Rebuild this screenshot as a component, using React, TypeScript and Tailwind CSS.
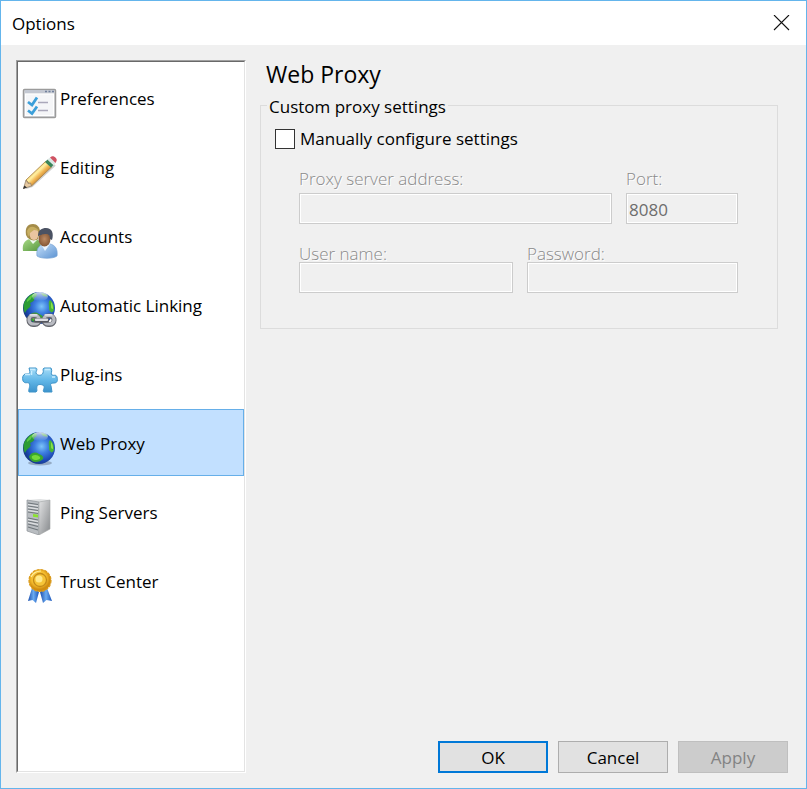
import { useState } from "react";
import type { ReactNode } from "react";

const Globe = ({ id }: { id: string }) => (
  <g>
    <defs>
      <radialGradient id={`${id}-ocean`} cx="0.58" cy="0.45" r="0.6">
        <stop offset="0" stopColor="#7cc4f8" />
        <stop offset="0.35" stopColor="#3f80e0" />
        <stop offset="0.75" stopColor="#1c49b4" />
        <stop offset="1" stopColor="#16357f" />
      </radialGradient>
      <linearGradient id={`${id}-shine`} x1="0" y1="0" x2="0" y2="1">
        <stop offset="0" stopColor="#fff" stopOpacity="0.8" />
        <stop offset="1" stopColor="#fff" stopOpacity="0" />
      </linearGradient>
    </defs>
    <circle cx="17" cy="18" r="16" fill={`url(#${id}-ocean)`} />
    <path d="M3 11C6 6 10 3 14 3c2 2 0 4-2 5 1 2-1 4-4 5 1 2 1 3-1 5-2 1-3 3-4 5-2-4-2-9 0-12Z" fill="#2c9c35" />
    <path d="M5 10c2-3 4-5 7-6 0 2-3 3-3 5l-4 3Z" fill="#5cc846" />
    <path d="M8 25c3-3 6-3 9-1 3 1 5 3 4 5-3 3-8 4-11 2-2-2-4-4-2-6Z" fill="#3aa72c" />
    <path d="M10 26c3-2 6-1 8 1 1 2-2 3-4 3-3 0-5-2-4-4Z" fill="#74da3a" />
    <path d="M28 10c3 2 4 6 4 10-1 2-2 3-3 2-2-1-2-3-2-5 0-3-1-5 1-7Z" fill="#46b433" />
    <path d="M29 12c2 2 2 5 2 7-2 0-2-2-2-3Z" fill="#8be04a" />
    <path d="M19 3c3 0 5 1 7 3-3 1-5 1-7-3Z" fill="#3fa04c" />
    <ellipse cx="18" cy="6.500" rx="8" ry="4.500" fill={`url(#${id}-shine)`} />
  </g>
);

const PreferencesIcon = () => (
  <svg width="36" height="36" viewBox="0 0 36 36" aria-hidden="true">
    <rect x="1.500" y="4.500" width="32" height="28" rx="1" fill="#d7d9dc" stroke="#9b9b9b" strokeWidth="1.500" />
    <rect x="3" y="5" width="29" height="3" fill="#c3c8d2" />
    <path d="M23 6.500h2M26.500 6.500h2M30 6.500h2" stroke="#71809c" strokeWidth="1.500" />
    <rect x="3.500" y="9" width="28" height="21.500" fill="#f5f6f8" stroke="#fff" />
    <path d="M16 17.500h10M16 25.500h10" stroke="#aaa8ba" strokeWidth="1.600" />
    <path d="m6 17 4 3 5-7.500M6 25.500l4 3 5-7" fill="none" stroke="#3c9fd9" strokeWidth="2.800" />
  </svg>
);

const PencilIcon = () => (
  <svg width="36" height="36" viewBox="0 0 36 36" aria-hidden="true">
    <defs>
      <linearGradient id="wood" x1="0.3" y1="0.3" x2="0.7" y2="0.7">
        <stop offset="0" stopColor="#e9c766" />
        <stop offset="0.35" stopColor="#ffefa0" />
        <stop offset="0.6" stopColor="#f1b452" />
        <stop offset="1" stopColor="#a7702c" />
      </linearGradient>
    </defs>
    <path d="m4 34 6-2 23-21" stroke="#888" strokeWidth="2" opacity="0.4" fill="none" />
    <path d="M4 26 23.500 7.500l6 5.500L9.500 32Z" fill="url(#wood)" stroke="#a67b3c" strokeWidth="0.800" />
    <path d="M4 26 1.500 34.500 9.500 32 8.500 29 6 29.500Z" fill="#e7c9a0" stroke="#8c7960" strokeWidth="0.700" />
    <path d="m2.300 31.500-1.300 3.500 4-1.500Z" fill="#333" />
    <path d="m23 8 2.500-2.500 6 5.500L29 13.500Z" fill="#39845a" />
    <path d="m25.500 5.500 2.500-2 5.500 5.500-2 2Z" fill="#dce7e5" />
    <path d="m28 3.500 1.500-1c2-1.500 6.500 2 5 4.500l-1 2Z" fill="#cf5262" />
  </svg>
);

const AccountsIcon = () => (
  <svg width="36" height="36" viewBox="0 0 36 36" aria-hidden="true">
    <defs>
      <linearGradient id="greenCoat" x1="0" y1="0" x2="1" y2="1">
        <stop offset="0" stopColor="#a9da86" />
        <stop offset="1" stopColor="#55963d" />
      </linearGradient>
      <linearGradient id="blueCoat" x1="0" y1="0" x2="1" y2="1">
        <stop offset="0" stopColor="#c6e0fa" />
        <stop offset="1" stopColor="#5c93d2" />
      </linearGradient>
      <radialGradient id="face">
        <stop offset="0" stopColor="#bd8a62" />
        <stop offset="1" stopColor="#855737" />
      </radialGradient>
    </defs>
    <path d="M1 28c-1-6 1-11 7-12h6c4 1 5 5 5 12Z" fill="url(#greenCoat)" />
    <path d="m7 16 4 5 5-5Z" fill="#eef8ee" />
    <path d="M4 12c-1-7 1-11 7-11 4 0 7 3 7 8l-2 7c-4 3-10 1-12-4Z" fill="#a48c49" />
    <ellipse cx="12" cy="11" rx="4.500" ry="6" fill="#eac5a0" />
    <path d="M5 8C7 3 12 2 17 8l-5-1-4 3-2 4Z" fill="#c7ae61" />
    <path d="M15 33c-1-7 2-11 7-12h6c5 1 8 5 7 12-4 3-16 3-20 0Z" fill="url(#blueCoat)" stroke="#77a4d4" strokeWidth="0.700" />
    <path d="m19 21 4 7 5-7Z" fill="#edf5ff" />
    <ellipse cx="22.500" cy="16" rx="6" ry="7.500" fill="url(#face)" />
    <path d="M16 13c0-6 4-8 8-8 6 0 8 5 6 12l-2-1c0-3-1-5-4-5-4 0-5 1-8 2Z" fill="#4b5263" />
  </svg>
);

const LinkingIcon = () => (
  <svg width="36" height="36" viewBox="0 0 36 36" aria-hidden="true">
    <g transform="translate(0 -2)">
      <Globe id="linking" />
    </g>
    <g fill="none" strokeLinecap="round">
      <g stroke="#65676e" strokeWidth="5">
        <rect x="7" y="24" width="10" height="8.500" rx="4" />
        <rect x="22" y="24" width="10" height="8.500" rx="4" />
      </g>
      <g stroke="#b9bbc2" strokeWidth="3.200">
        <rect x="7" y="23.500" width="10" height="8.500" rx="4" />
        <rect x="22" y="23.500" width="10" height="8.500" rx="4" />
      </g>
      <path d="M8 22.800h7M23 22.800h7" stroke="#f1f2f4" strokeWidth="1.200" />
      <path d="M14 28.500h11" stroke="#55575f" strokeWidth="4.500" />
      <path d="M14 27.800h11" stroke="#dddee2" strokeWidth="2.400" />
    </g>
  </svg>
);

const PluginsIcon = () => (
  <svg width="36" height="36" viewBox="0 0 36 36" aria-hidden="true">
    <defs>
      <linearGradient id="puzzle" x1="0" y1="0" x2="0" y2="1">
        <stop offset="0" stopColor="#a6dcf7" />
        <stop offset="0.5" stopColor="#63b8e8" />
        <stop offset="1" stopColor="#3c93cc" />
      </linearGradient>
    </defs>
    <path
      d="M7 7h7c2 1 0 3 0 5 1 3 6 3 7 0 1-2-1-4 1-5h7c2 3-1 6 1 7 2 1 4-1 5 2 1 4 0 6-3 6-3 0-4 1-3 3l1 6h-8c-2-1 1-4 0-6-2-2-6-2-7 0-1 3 1 5-1 6H7c-1-3 2-6 0-9-2-1-4 1-6-2-1-4 0-6 2-7 3 0 5 0 5-2Z"
      fill="url(#puzzle)"
      stroke="#3e93c8"
      strokeLinejoin="round"
    />
    <path d="M8 8.500h5M23 8.500h5M9.500 10v4M3 13.500h5M30 16h3" stroke="#c9edff" strokeWidth="1.500" />
  </svg>
);

const GlobeIcon = () => (
  <svg width="36" height="36" viewBox="0 0 36 36" aria-hidden="true">
    <ellipse cx="18" cy="33" rx="12" ry="2.500" fill="#68758c" opacity="0.5" />
    <Globe id="proxy" />
  </svg>
);

const ServerIcon = () => (
  <svg width="36" height="36" viewBox="0 0 36 36" aria-hidden="true">
    <defs>
      <linearGradient id="side" x1="0" y1="0" x2="1" y2="1">
        <stop offset="0" stopColor="#e2e3e4" />
        <stop offset="1" stopColor="#85888b" />
      </linearGradient>
    </defs>
    <path d="m5 1 13-1 10 1-11 3Z" fill="#dfe1e2" />
    <path d="M5 1l12 2v33L5 32Z" fill="#b9bdc1" stroke="#8e9498" strokeWidth="0.700" />
    <path d="m17 3 11-2v29l-11 6Z" fill="url(#side)" stroke="#a1a4a6" strokeWidth="0.600" />
    <path d="m6 4 10 1.500M6 7l10 1.500M6 10l10 1.500M6 13l10 1.500M6 19l10 2M6 22l10 2M6 25l10 2.500M6 28l10 3" stroke="#6f767b" strokeWidth="1.200" />
    <path d="m6 5.500 10 1.500M6 8.500 16 10M6 11.500 16 13M6 20.500l10 2M6 23.500l10 2" stroke="#eceeef" strokeWidth="0.800" />
    <path d="m11 15 5 .7v2.800l-5-.7Z" fill="#8be32f" />
  </svg>
);

const RibbonIcon = () => (
  <svg width="36" height="36" viewBox="0 0 36 36" aria-hidden="true">
    <defs>
      <radialGradient id="medal" cx="0.45" cy="0.4">
        <stop offset="0" stopColor="#ffe36a" />
        <stop offset="0.7" stopColor="#f3ba2c" />
        <stop offset="1" stopColor="#d08c10" />
      </radialGradient>
      <linearGradient id="ribbon" x1="0" x2="1">
        <stop offset="0" stopColor="#1c4fae" />
        <stop offset="0.5" stopColor="#6aaaf0" />
        <stop offset="1" stopColor="#1a55bb" />
      </linearGradient>
    </defs>
    <path d="m10 20 7 4-3 11-3.500-3L6 33Z" fill="url(#ribbon)" />
    <path d="m25 20-7 4 3 11 3.500-3L30 33Z" fill="url(#ribbon)" />
    <circle cx="18" cy="12.500" r="11" fill="url(#medal)" stroke="#dc9c1c" strokeWidth="1.200" strokeDasharray="3 1" />
    <circle cx="18" cy="12" r="6.500" fill="#f6c437" stroke="#c48a18" strokeWidth="1.300" />
    <circle cx="17" cy="11" r="3.500" fill="#ffe98c" />
    <path d="M9 9c2-4 6-6 10-6" fill="none" stroke="#fff0a0" strokeWidth="1.200" />
  </svg>
);

const sections: { name: string; icon: ReactNode }[] = [
  { name: "Preferences", icon: <PreferencesIcon /> },
  { name: "Editing", icon: <PencilIcon /> },
  { name: "Accounts", icon: <AccountsIcon /> },
  { name: "Automatic Linking", icon: <LinkingIcon /> },
  { name: "Plug-ins", icon: <PluginsIcon /> },
  { name: "Web Proxy", icon: <GlobeIcon /> },
  { name: "Ping Servers", icon: <ServerIcon /> },
  { name: "Trust Center", icon: <RibbonIcon /> },
];

function Field({ id, label, value, type = "text", disabled, className, tight }: {
  id: string; label: string; value?: string; type?: string; disabled: boolean; className: string; tight?: boolean;
}) {
  return (
    <div className={`flex min-w-0 flex-col ${className}`}>
      <label
        htmlFor={id}
        className={`${tight ? "h-4 leading-4" : "h-6 leading-5"} ${disabled ? "font-light text-[#8a8a8a] [text-shadow:1px_1px_0_#ffffff]" : ""}`}
      >
        {label}
      </label>
      <input
        id={id}
        type={type}
        defaultValue={value}
        disabled={disabled}
        className="h-[31px] w-full border border-[#cccccc] bg-white px-0.5 pt-0.5 disabled:bg-[#f0f0f0] disabled:text-[#6d6d6d] disabled:shadow-[inset_0_0_0_1px_#ffffff]"
      />
    </div>
  );
}

export default function App() {
  const [selected, setSelected] = useState("Web Proxy");
  const [manual, setManual] = useState(false);

  return (
    <div className="flex min-h-screen flex-col border border-[#64b5ec] bg-[#f0f0f0] font-['Open_Sans','Noto_Sans',sans-serif] text-[17px] leading-6 text-black">
      <header className="flex h-11 items-center justify-between bg-white pr-4 pl-[11px]">
        <h1 className="pt-0.5">Options</h1>
        <button type="button" aria-label="Close">
          <svg width="17" height="17" viewBox="0 0 17 17" aria-hidden="true">
            <path d="m1 0 15 15M16 0 1 15" stroke="#111" strokeWidth="1.100" />
          </svg>
        </button>
      </header>

      <div className="flex flex-1 gap-3.5 py-[15px] pl-[15px]">
        <nav className="w-[230px] shrink-0 border border-t-[#a0a0a0] border-r-white border-b-white border-l-[#a0a0a0]">
          <ul className="flex h-full flex-col gap-0.5 border border-t-[#696969] border-r-[#e3e3e3] border-b-[#e3e3e3] border-l-[#696969] bg-white pt-0.5">
            {sections.map(({ name, icon }) => (
              <li key={name}>
                <button
                  type="button"
                  onClick={() => setSelected(name)}
                  className={`flex h-[67px] w-full items-start gap-0.5 border pt-5 pl-[3px] text-left ${
                    name === selected ? "border-[#66afe9] bg-[#c2e0ff]" : "border-transparent"
                  }`}
                >
                  {icon}
                  <span className="pt-0.5">{name}</span>
                </button>
              </li>
            ))}
          </ul>
        </nav>

        <main className="flex min-w-0 flex-1 flex-col justify-between pr-[18px]">
          <section className="pr-2.5">
            <h2 className="pb-[3px] pl-1.5 text-[23px] leading-7">Web Proxy</h2>
            <fieldset className="border border-[#dcdcdc] pr-[39px] pb-[35px] pl-3.5">
              <legend className="-ml-2 px-0.5 pt-1">Custom proxy settings</legend>
              <label className="flex items-center gap-[5px] pt-2">
                <input
                  type="checkbox"
                  checked={manual}
                  onChange={(event) => setManual(event.target.checked)}
                  className="grid size-5 appearance-none place-content-center border border-[#333333] bg-white before:text-sm checked:before:content-['✓']"
                />
                Manually configure settings
              </label>
              <div className="mt-[18px] flex flex-col gap-[22px] pl-6">
                <div className="flex gap-3.5">
                  <Field id="server" label="Proxy server address:" disabled={!manual} className="flex-1" />
                  <Field id="port" label="Port:" value="8080" disabled={!manual} className="w-28" />
                </div>
                <div className="flex gap-3.5">
                  <Field id="user" label="User name:" disabled={!manual} className="w-[214px]" tight />
                  <Field id="password" label="Password:" type="password" disabled={!manual} className="flex-1" tight />
                </div>
              </div>
            </fieldset>
          </section>

          <footer className="flex justify-end gap-2.5">
            <button type="button" className="h-8 w-[110px] border-2 border-[#0078d7] bg-[#e1e1e1] pt-0.5">OK</button>
            <button type="button" className="h-8 w-[110px] border border-[#adadad] bg-[#e1e1e1] pt-0.5">Cancel</button>
            <button type="button" disabled className="h-8 w-[110px] border border-[#bfbfbf] bg-[#cccccc] pt-0.5 text-[#838383]">Apply</button>
          </footer>
        </main>
      </div>
    </div>
  );
}
